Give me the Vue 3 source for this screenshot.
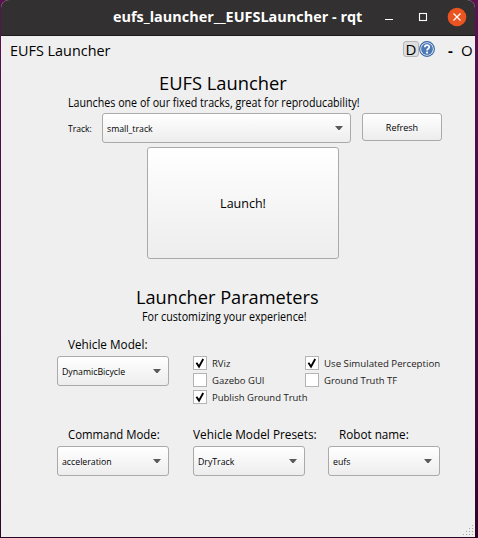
<script setup>
import { ref } from 'vue'

const track = ref('small_track')
const leftChecks = ref([
  { label: 'RViz', on: true, cls: 'c-rviz' },
  { label: 'Gazebo GUI', on: false, cls: 'c-gazebo' },
  { label: 'Publish Ground Truth', on: true, cls: 'c-publish' },
])
const rightChecks = ref([
  { label: 'Use Simulated Perception', on: true, cls: 'c-sim' },
  { label: 'Ground Truth TF', on: false, cls: 'c-tf' },
])
const fields = [
  { label: 'Command Mode:', value: 'acceleration', cls: 'f-command' },
  { label: 'Vehicle Model Presets:', value: 'DryTrack', cls: 'f-presets' },
  { label: 'Robot name:', value: 'eufs', cls: 'f-robot' },
]
const gripDots = [[9, 0], [6, 3], [9, 3], [3, 6], [6, 6], [9, 6], [0, 9], [3, 9], [6, 9], [9, 9]]
</script>

<template>
  <div class="desktop">
    <div class="window">
      <header class="titlebar">
        <span class="title"><span class="t t-title">eufs_launcher__EUFSLauncher - rqt</span></span>
        <svg class="controls" width="86" height="35" viewBox="0 0 86 35">
          <path d="M0 19.5h8" stroke="#fff" stroke-width="1.2" />
          <rect x="34.5" y="13.5" width="7" height="7" fill="none" stroke="#fff" stroke-width="1.1" />
          <circle cx="72" cy="17" r="9.3" fill="#e95420" />
          <path d="M68.5 13.5l7 7M75.5 13.5l-7 7" stroke="#fff" stroke-width="1.3" />
        </svg>
      </header>
      <div class="dock">
        <span class="t t-dock">EUFS Launcher</span>
        <span class="dock-tools">
          <span class="d-btn">D</span>
          <svg width="16" height="16" viewBox="0 0 16 16">
            <circle cx="8" cy="8" r="7.4" fill="#e4ebf4" stroke="#3465a4" stroke-width="1.1" />
            <circle cx="8" cy="8" r="5.9" fill="#4c78b3" />
            <path d="M5.8 6.3C5.8 3.5 10.3 3.5 10.3 6.1C10.3 7.8 8 7.8 8 9.6" fill="none" stroke="#fff" stroke-width="1.7" />
            <rect x="7.1" y="10.6" width="1.9" height="1.9" fill="#fff" />
          </svg>
          <span class="dash">-</span>
          <span class="oh">O</span>
        </span>
      </div>

      <main class="form">
        <h1><span class="t t-h1">EUFS Launcher</span></h1>
        <p class="sub1"><span class="t t-sub">Launches one of our fixed tracks, great for reproducability!</span></p>
        <div class="track-row">
          <span class="track-label"><span class="t t-track">Track:</span></span>
          <div class="combo wide">
            <span class="t val">{{ track }}</span>
            <svg width="8" height="5" viewBox="0 0 8 5"><path d="M0 0h8L4.6 4H3.4z" fill="#5a5a5a" /></svg>
          </div>
          <button class="btn refresh"><span class="t t-refresh">Refresh</span></button>
        </div>
        <button class="btn launch"><span class="t t-launch">Launch!</span></button>

        <h1 class="h-params"><span class="t t-h2">Launcher Parameters</span></h1>
        <p class="sub2"><span class="t t-sub">For customizing your experience!</span></p>

        <div class="label veh"><span class="t t-veh">Vehicle Model:</span></div>
        <div class="params">
          <div class="combo">
            <span class="t val">DynamicBicycle</span>
            <svg width="8" height="5" viewBox="0 0 8 5"><path d="M0 0h8L4.6 4H3.4z" fill="#5a5a5a" /></svg>
          </div>
          <div v-for="(col, i) in [leftChecks, rightChecks]" :key="i" class="checks">
            <div v-for="c in col" :key="c.label" class="check" @click="c.on = !c.on">
              <span class="box">
                <svg v-if="c.on" width="12" height="12" viewBox="0 0 12 12">
                  <path d="M2.4 5.8L5 9.6L9.2 2" fill="none" stroke="#000" stroke-width="1.9" />
                </svg>
              </span>
              <span class="t" :class="c.cls">{{ c.label }}</span>
            </div>
          </div>
        </div>

        <div class="fields">
          <div v-for="f in fields" :key="f.label" class="field" :class="f.cls">
            <div class="label"><span class="t lab">{{ f.label }}</span></div>
            <div class="combo">
              <span class="t val">{{ f.value }}</span>
              <svg width="8" height="5" viewBox="0 0 8 5"><path d="M0 0h8L4.6 4H3.4z" fill="#5a5a5a" /></svg>
            </div>
          </div>
        </div>
      </main>
      <svg class="grip" width="10" height="10" viewBox="0 0 10 10">
        <rect v-for="(d, i) in gripDots" :key="i" :x="d[0]" :y="d[1]" width="1" height="1" fill="#a8a8a8" />
      </svg>
    </div>
  </div>
</template>

<style>
body { margin: 0; background: #300a2a; }
</style>

<style scoped>
.desktop {
  width: 478px; height: 538px; box-sizing: border-box; padding: 0 3px 1px 1px;
  background: linear-gradient(#5c1350 0, #4d0d47 30%, #400a3d 75%, #2c0628 100%);
  overflow: hidden; font-family: "Open Sans", "Noto Sans", sans-serif; color: #000;
}
.window { position: relative; width: 474px; height: 537px; background: #efefef; border-radius: 8px 8px 0 0; overflow: hidden; }
.t { display: inline-block; white-space: nowrap; transform-origin: 0 50%; }
.t-title { transform: scaleX(.995); }
.t-dock { transform: scaleX(.96); }
.t-h1 { transform: scaleX(.99); }
.t-h2 { transform: scaleX(.983); }
.t-sub { transform: scaleX(.89); }
.t-veh { transform: scaleX(.94); }
.t-track { transform: scaleX(.9); }
.t-refresh { transform: scaleX(.95); transform-origin: 50% 50%; }
.val { transform: scaleX(.92); }
.c-sim { transform: scaleX(1.018); }
.f-command .lab { transform: scaleX(.91); }
.f-presets .lab { transform: scaleX(.945); }
.f-robot .lab { transform: scaleX(.935); }
.titlebar { display: flex; height: 35px; background: #323030; border-bottom: 1px solid #1d1b1b; color: #fff; }
.title { width: 384px; padding-left: 112px; box-sizing: border-box; line-height: 34px; font-weight: 700; font-size: 14.5px; }
.controls { flex: none; }
.dock { display: flex; justify-content: space-between; height: 30px; padding: 0 2px 0 9px; line-height: 28px; font-size: 15px; }
.dock-tools { display: flex; align-items: flex-start; }
.dock-tools svg { margin-top: 5px; }
.d-btn { width: 14px; height: 14px; margin-top: 5px; line-height: 15px; text-align: center; border: 1px solid #b6b6b6; border-radius: 3px; background: #dedede; }
.dash { margin-left: 13px; width: 6px; font-weight: 700; }
.oh { margin-left: 7px; width: 12px; }
.form { display: flex; flex-direction: column; }
h1 { margin: 0; height: 28px; padding: 4px 0 0 158px; box-sizing: content-box; line-height: 26px; font-weight: 400; font-size: 18.5px; }
p { margin: 0; font-size: 12px; height: 14px; line-height: 14px; }
.sub1 { padding-left: 67px; margin-top: -2px; }
.track-row { display: flex; height: 34px; margin-top: 3px; }
.track-label { width: 34px; padding-left: 67px; line-height: 31px; font-size: 9.5px; }
.combo, .btn { box-sizing: border-box; border: 1px solid #aaa; border-radius: 3px; background: linear-gradient(#fff, #ededed); }
.combo { display: flex; align-items: center; justify-content: space-between; width: 112px; height: 30px; padding: 0 7px 0 4px; font-size: 9.5px; }
.combo.wide { width: 249px; }
.btn { padding: 0; font: inherit; color: #000; display: flex; align-items: center; justify-content: center; }
.refresh { width: 80px; height: 28px; margin-left: 11px; font-size: 9.5px; }
.launch { width: 192px; height: 112px; margin-left: 146px; font-size: 12.5px; }
.h-params { margin-top: 21px; padding-left: 135px; }
.sub2 { padding-left: 141px; margin-top: -2px; }
.label { font-size: 12.5px; height: 16px; line-height: 16px; }
.veh { padding-left: 67px; margin-top: 13px; }
.params { display: flex; height: 71px; margin-top: 3px; padding-left: 56px; }
.checks { display: flex; flex-direction: column; gap: 3px; width: 112px; font-size: 9.5px; color: #222; }
.params .combo { margin-right: 24px; }
.check { display: flex; align-items: center; gap: 5px; height: 14px; }
.box { width: 14px; height: 14px; box-sizing: border-box; border: 1px solid #b4b4b4; background: #fff; flex: none; display: flex; }
.fields { display: flex; padding-left: 56px; }
.field { width: 112px; }
.field .label { margin-bottom: 3px; }
.f-command .label { padding-left: 11px; }
.f-presets { margin-left: 24px; }
.f-robot { margin-left: 23px; }
.f-robot .label { padding-left: 11px; }
.grip { position: absolute; right: 2px; bottom: 2px; }
</style>
